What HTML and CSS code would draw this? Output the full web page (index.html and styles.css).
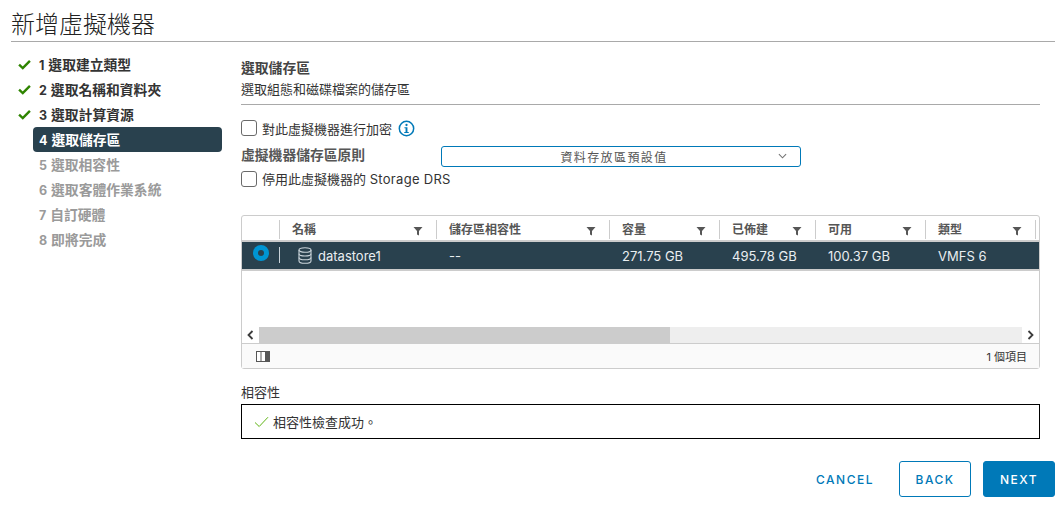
FILE: index.html
```html
<!DOCTYPE html>
<html lang="zh-Hant">
<head>
<meta charset="utf-8">
<title>新增虛擬機器</title>
<link rel="stylesheet" href="styles.css">
</head>
<body>
<div class="wizard">
  <h1 class="title">新增虛擬機器</h1>
  <div class="body">
    <nav class="steps">
      <div class="step done"><svg class="tick" viewBox="0 0 12 10"><path d="M1 5.2 4.4 8.4 11 1.6" fill="none" stroke="#2f8400" stroke-width="2.2"/></svg><span class="step-label"><span class="num">1 </span>選取建立類型</span></div>
      <div class="step done"><svg class="tick" viewBox="0 0 12 10"><path d="M1 5.2 4.4 8.4 11 1.6" fill="none" stroke="#2f8400" stroke-width="2.2"/></svg><span class="step-label"><span class="num">2 </span>選取名稱和資料夾</span></div>
      <div class="step done"><svg class="tick" viewBox="0 0 12 10"><path d="M1 5.2 4.4 8.4 11 1.6" fill="none" stroke="#2f8400" stroke-width="2.2"/></svg><span class="step-label"><span class="num">3 </span>選取計算資源</span></div>
      <div class="step active"><span class="step-label"><span class="num">4 </span>選取儲存區</span></div>
      <div class="step todo"><span class="step-label"><span class="num">5 </span>選取相容性</span></div>
      <div class="step todo"><span class="step-label"><span class="num">6 </span>選取客體作業系統</span></div>
      <div class="step todo"><span class="step-label"><span class="num">7 </span>自訂硬體</span></div>
      <div class="step todo"><span class="step-label"><span class="num">8 </span>即將完成</span></div>
    </nav>
    <main class="main">
      <header class="head">
        <div class="head-title">選取儲存區</div>
        <div class="head-sub">選取組態和磁碟檔案的儲存區</div>
      </header>
      <div class="form">
        <div class="check-row">
          <span class="box"></span><span>對此虛擬機器進行加密</span>
          <svg class="info" viewBox="0 0 18 18"><circle cx="9" cy="9" r="7.6" fill="none" stroke="#0079b8" stroke-width="1.6"/><circle cx="9" cy="5.3" r="1.2" fill="#0079b8"/><path d="M6.8 7.6H10V12.6H11.4V13.8H6.6V12.6H8V8.8H6.8Z" fill="#0079b8"/></svg>
        </div>
        <div class="policy-row">
          <label class="policy-label">虛擬機器儲存區原則</label>
          <div class="select"><span class="select-text">資料存放區預設值</span><svg class="chev" viewBox="0 0 10 6"><path d="M1 1 5 5 9 1" fill="none" stroke="#737373" stroke-width="1.2"/></svg></div>
        </div>
        <div class="check-row second">
          <span class="box"></span><span class="second-text">停用此虛擬機器的 <span class="latin">Storage DRS</span></span>
        </div>
      </div>
      <section class="grid">
        <div class="grid-row grid-head">
          <div class="c c0"></div>
          <div class="c c1"><span>名稱</span><svg class="filter" viewBox="0 0 10 10"><path d="M0.5 1H9.5L6 5V9.5L4 8.5V5Z" fill="#565656"/></svg></div>
          <div class="c c2"><span>儲存區相容性</span><svg class="filter" viewBox="0 0 10 10"><path d="M0.5 1H9.5L6 5V9.5L4 8.5V5Z" fill="#565656"/></svg></div>
          <div class="c c3"><span>容量</span><svg class="filter" viewBox="0 0 10 10"><path d="M0.5 1H9.5L6 5V9.5L4 8.5V5Z" fill="#565656"/></svg></div>
          <div class="c c4"><span>已佈建</span><svg class="filter" viewBox="0 0 10 10"><path d="M0.5 1H9.5L6 5V9.5L4 8.5V5Z" fill="#565656"/></svg></div>
          <div class="c c5"><span>可用</span><svg class="filter" viewBox="0 0 10 10"><path d="M0.5 1H9.5L6 5V9.5L4 8.5V5Z" fill="#565656"/></svg></div>
          <div class="c c6"><span>類型</span><svg class="filter" viewBox="0 0 10 10"><path d="M0.5 1H9.5L6 5V9.5L4 8.5V5Z" fill="#565656"/></svg></div>
        </div>
        <div class="grid-row grid-selected">
          <div class="c c0"><span class="radio"></span></div>
          <div class="c c1"><svg class="db" viewBox="0 0 14 17"><g fill="none" stroke="#c9d3d9" stroke-width="1.1"><ellipse cx="7" cy="3" rx="6" ry="2.3"/><path d="M1 3V14C1 15.3 3.7 16.3 7 16.3S13 15.3 13 14V3"/><path d="M1 6.7C1 8 3.7 9 7 9S13 8 13 6.7"/><path d="M1 10.4C1 11.7 3.7 12.7 7 12.7S13 11.7 13 10.4"/></g></svg><span>datastore1</span></div>
          <div class="c c2">--</div>
          <div class="c c3">271.75 GB</div>
          <div class="c c4">495.78 GB</div>
          <div class="c c5">100.37 GB</div>
          <div class="c c6">VMFS 6</div>
        </div>
        <div class="grid-empty"></div>
        <div class="scroll">
          <svg class="arrow" viewBox="0 0 8 10"><path d="M6 1 2 5 6 9" fill="none" stroke="#3c3c3c" stroke-width="1.8"/></svg>
          <div class="track"><div class="thumb"></div></div>
          <svg class="arrow" viewBox="0 0 8 10"><path d="M2 1 6 5 2 9" fill="none" stroke="#3c3c3c" stroke-width="1.8"/></svg>
        </div>
        <div class="grid-foot">
          <svg class="cols" viewBox="0 0 14 11"><rect x="0.5" y="0.5" width="13" height="10" fill="#fff" stroke="#565656"/><path d="M5 0.5V10.5" stroke="#565656"/><rect x="9" y="0.5" width="5" height="10" fill="#565656"/></svg>
          <span class="count">1 個項目</span>
        </div>
      </section>
      <div class="compat-label">相容性</div>
      <div class="compat"><svg class="ok" viewBox="0 0 15 12"><path d="M1 6.5 5.2 10.5 14 1.2" fill="none" stroke="#60b515" stroke-width="1"/></svg><span>相容性檢查成功。</span></div>
    </main>
  </div>
  <footer class="actions">
    <button class="btn link">CANCEL</button>
    <button class="btn outline">BACK</button>
    <button class="btn primary">NEXT</button>
  </footer>
</div>
</body>
</html>
```
FILE: styles.css
```css
* { box-sizing: border-box; }
html, body { margin: 0; padding: 0; background: #fff; }
body {
  width: 1061px;
  height: 508px;
  overflow: hidden;
  font-family: "Inter", "Noto Sans CJK TC", sans-serif;
  color: #333;
  font-size: 13px;
}
.wizard { padding: 0 6px 0 11px; }
.title {
  margin: 0;
  height: 42px;
  padding-top: 8px;
  font-family: "Noto Sans CJK TC", sans-serif;
  font-size: 24px;
  line-height: 30px;
  font-weight: 300;
  color: #222;
  border-bottom: 1px solid #a9a9a9;
}
.body { display: flex; }
.steps { width: 230px; padding-top: 10px; flex: none; }
.step {
  display: flex;
  align-items: center;
  height: 25px;
  width: 211px;
  font-size: 13.8px;
  font-weight: 700;
  color: #333;
}
.step-label { margin-left: 28px; margin-bottom: 2px; }
.num { font-size: 12.5px; margin-right: 1px; }
.tick { width: 13px; height: 11px; margin-left: 7px; margin-right: -20px; flex: none; }
.step.active {
  margin-left: 22px;
  width: 189px;
  background: #29414e;
  color: #fff;
  border-radius: 4px;
}
.step.active .step-label, .step.todo .step-label { margin-left: 6px; }
.step.todo { margin-left: 22px; color: #9a9a9a; }
.main { width: 799px; flex: none; }
.head {
  height: 63px;
  padding-top: 16px;
  border-bottom: 1px solid #a9a9a9;
}
.head-title { font-weight: 700; font-size: 13.8px; line-height: 20px; color: #444; }
.head-sub { font-size: 13px; line-height: 20px; color: #333; margin-top: 1px; }
.form { padding-top: 13px; }
.check-row { display: flex; align-items: center; height: 20px; font-size: 13px; color: #333; }
.check-row.second { margin-top: 2px; }
.second-text { margin-bottom: 2px; }
.box {
  width: 16px;
  height: 16px;
  border: 1px solid #6a6a6a;
  border-radius: 3px;
  margin-right: 5px;
  flex: none;
}
.info { width: 17px; height: 17px; margin-left: 6px; }
.latin { color: #333; letter-spacing: 0.3px; }
.policy-row { display: flex; align-items: flex-start; height: 21px; margin-top: 8px; }
.policy-label { width: 200px; font-weight: 700; font-size: 13.8px; line-height: 18px; color: #565656; }
.select {
  width: 360px;
  height: 21px;
  border: 1px solid #0079b8;
  border-radius: 3px;
  display: flex;
  align-items: center;
  position: relative;
  font-size: 12px;
}
.select-text { flex: 1; text-align: center; letter-spacing: 1.4px; color: #565656; padding-right: 14px; }
.chev { width: 9px; height: 6px; position: absolute; right: 13px; top: 6px; }
.grid {
  margin-top: 26px;
  width: 799px;
  border: 1px solid #ccc;
  border-radius: 3px;
  height: 154px;
  display: flex;
  flex-direction: column;
}
.grid-row { display: flex; }
.grid-head { height: 26px; border-bottom: 2px solid #ccc; font-weight: 700; color: #565656; font-size: 12px; }
.grid-selected { height: 29px; background: #29414e; color: #e9eef1; font-size: 13px; border-bottom: 2px solid #ccc; }
.c { flex: none; display: flex; align-items: center; padding-left: 12px; position: relative; }
.grid-head .c::after {
  content: "";
  position: absolute;
  right: 0;
  top: 4px;
  height: 19px;
  border-right: 1px solid #ccc;
}
.filter { width: 10px; height: 10px; position: absolute; right: 14px; top: 10px; }
.c0 { width: 38px; padding-left: 11px; }
.c1 { width: 157px; }
.c2 { width: 173px; }
.c3 { width: 110px; }
.c4 { width: 96px; }
.c5 { width: 110px; }
.c6 { width: 110px; }
.grid-selected .c1 { padding-left: 18px; }
.grid-selected .c0::after {
  content: "";
  position: absolute;
  right: 0;
  top: 5px;
  height: 16px;
  border-right: 1px solid #c9d3d9;
}
.radio {
  width: 16px;
  height: 16px;
  border-radius: 50%;
  background: #0095d3;
  margin-top: -5px;
  position: relative;
}
.radio::after {
  content: "";
  position: absolute;
  left: 5px;
  top: 5px;
  width: 6px;
  height: 6px;
  border-radius: 50%;
  background: #29414e;
}
.db { width: 14px; height: 17px; margin-right: 6px; flex: none; }
.grid-empty { flex: 1; }
.scroll { display: flex; height: 16px; align-items: stretch; background: #fff; }
.arrow { width: 17px; height: 16px; flex: none; padding: 3px 4px; }
.track { flex: 1; background: #eee; }
.thumb { width: 411px; height: 100%; background: #ccc; }
.grid-foot {
  height: 25px;
  background: #fafafa;
  border-top: 1px solid #ccc;
  display: flex;
  align-items: center;
  justify-content: space-between;
  padding: 0 12px 0 14px;
  font-size: 11px;
}
.cols { width: 14px; height: 11px; }
.count { color: #333; }
.compat-label { margin-top: 15px; line-height: 16px; font-size: 13px; color: #333; }
.compat {
  margin-top: 4px;
  height: 35px;
  width: 799px;
  border: 1px solid #000;
  display: flex;
  align-items: center;
  padding-left: 12px;
  color: #333;
}
.ok { width: 15px; height: 12px; margin-right: 4px; }
.actions { display: flex; justify-content: flex-end; margin-top: 22px; gap: 12px; }
.btn {
  height: 36px;
  font-family: "Inter", sans-serif;
  font-size: 12px;
  font-weight: 500;
  letter-spacing: 1.5px;
  border-radius: 3px;
  border: 1px solid #0079b8;
  padding: 0;
  width: 72px;
}
.btn.link { border: 0; background: transparent; color: #0079b8; width: 84px; }
.btn.outline { background: #fff; color: #0079b8; }
.btn.primary { background: #0079b8; color: #fff; }
```
